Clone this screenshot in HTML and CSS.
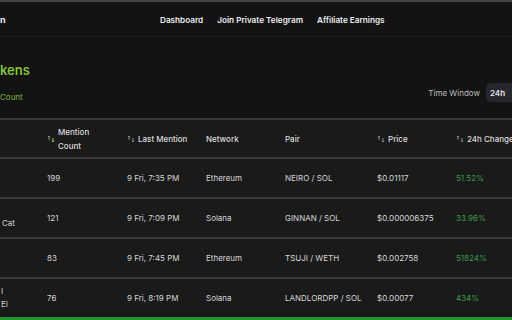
FILE: index.html
```html
<!DOCTYPE html>
<html lang="en">

<head>
    <meta charset="UTF-8">
    <meta name="viewport" content="width=device-width, initial-scale=1.0">
    <title>Trending Tokens</title>
    <link rel="stylesheet" href="styles.css">
</head>

<body>
    <div class="top-line"></div>
    <header class="nav">
        <div class="logo">n</div>
        <nav class="nav-links">
            <a href="#">Dashboard</a>
            <a href="#">Join Private Telegram</a>
            <a href="#">Affiliate Earnings</a>
        </nav>
    </header>

    <section class="hero">
        <div class="hero-text">
            <h1 class="title">kens</h1>
            <div class="subtitle">Count</div>
        </div>
        <div class="controls">
            <span class="control-label">Time Window</span>
            <button class="window-button">24h</button>
        </div>
    </section>

    <div class="token-table">
        <div class="row head">
            <div class="cell name"></div>
            <div class="cell sortable">
                <svg class="sort-icon" viewBox="0 0 8 8"><path d="M2 5V1M0.8 2.2L2 1l1.2 1.2" stroke="#8a8a8a" /><path d="M6 3v4M4.8 5.8L6 7l1.2-1.2" stroke="#8bc34a" /></svg>
                <span>Mention<br>Count</span>
            </div>
            <div class="cell sortable">
                <svg class="sort-icon" viewBox="0 0 8 8"><path d="M2 5V1M0.8 2.2L2 1l1.2 1.2" stroke="#8a8a8a" /><path d="M6 3v4M4.8 5.8L6 7l1.2-1.2" stroke="#8a8a8a" /></svg>
                <span>Last Mention</span>
            </div>
            <div class="cell">Network</div>
            <div class="cell">Pair</div>
            <div class="cell sortable">
                <svg class="sort-icon" viewBox="0 0 8 8"><path d="M2 5V1M0.8 2.2L2 1l1.2 1.2" stroke="#8a8a8a" /><path d="M6 3v4M4.8 5.8L6 7l1.2-1.2" stroke="#8a8a8a" /></svg>
                <span>Price</span>
            </div>
            <div class="cell sortable">
                <svg class="sort-icon" viewBox="0 0 8 8"><path d="M2 5V1M0.8 2.2L2 1l1.2 1.2" stroke="#8a8a8a" /><path d="M6 3v4M4.8 5.8L6 7l1.2-1.2" stroke="#8a8a8a" /></svg>
                <span>24h Change</span>
            </div>
        </div>

        <div class="row">
            <div class="cell name"></div>
            <div class="cell">199</div>
            <div class="cell">9 Fri, 7:35 PM</div>
            <div class="cell">Ethereum</div>
            <div class="cell">NEIRO / SOL</div>
            <div class="cell">$0.01117</div>
            <div class="cell change">51.52%</div>
        </div>
        <div class="row">
            <div class="cell name"><span class="low">Cat</span></div>
            <div class="cell">121</div>
            <div class="cell">9 Fri, 7:09 PM</div>
            <div class="cell">Solana</div>
            <div class="cell">GINNAN / SOL</div>
            <div class="cell">$0.000006375</div>
            <div class="cell change">33.96%</div>
        </div>
        <div class="row">
            <div class="cell name"></div>
            <div class="cell">83</div>
            <div class="cell">9 Fri, 7:45 PM</div>
            <div class="cell">Ethereum</div>
            <div class="cell">TSUJI / WETH</div>
            <div class="cell">$0.002758</div>
            <div class="cell change">51824%</div>
        </div>
        <div class="row last">
            <div class="cell name"><span class="two-line">I<br>EI</span></div>
            <div class="cell">76</div>
            <div class="cell">9 Fri, 8:19 PM</div>
            <div class="cell">Solana</div>
            <div class="cell">LANDLORDPP / SOL</div>
            <div class="cell">$0.00077</div>
            <div class="cell change">434%</div>
        </div>
    </div>
</body>

</html>
```

FILE: styles.css
```css
body {
    margin: 0;
    padding: 0;
    width: 512px;
    height: 320px;
    overflow: hidden;
    background-color: #131313;
    color: #d6d6d6;
    font-family: Inter, "Noto Sans", sans-serif;
}

.top-line {
    height: 2px;
    background-color: #454545;
}

.nav {
    display: flex;
    align-items: center;
    height: 35px;
    padding-top: 1px;
    box-sizing: border-box;
    border-bottom: 1px solid #1e1e1e;
}

.logo {
    font-size: 9px;
    font-weight: 700;
    color: #eeeeee;
    width: 6px;
}

.nav-links {
    display: flex;
    gap: 14px;
    margin-left: 154px;
}

.nav-links a {
    color: #ececec;
    text-decoration: none;
    font-size: 8.2px;
    font-weight: 600;
}

.hero {
    display: flex;
    justify-content: space-between;
    align-items: flex-end;
    width: 560px;
    margin-top: 23px;
}

.title {
    margin: 0;
    font-size: 13px;
    line-height: 20px;
    font-weight: 600;
    color: #86c23a;
}

.subtitle {
    margin-top: 12px;
    font-size: 8px;
    line-height: 10px;
    color: #7fb83c;
}

.controls {
    display: flex;
    align-items: center;
    gap: 6px;
}

.control-label {
    font-size: 8px;
    color: #bdbdbd;
}

.window-button {
    width: 74px;
    height: 19px;
    padding: 0 0 0 4px;
    text-align: left;
    border: none;
    border-radius: 5px;
    background-color: #26262e;
    color: #e6e6e6;
    font-family: Inter, "Noto Sans", sans-serif;
    font-size: 8px;
    font-weight: 600;
}

.token-table {
    margin-top: 16px;
    border-top: 2px solid #3a3a3a;
    background-color: #1a1a1a;
}

.row {
    display: grid;
    grid-template-columns: 47px 80px 79px 79px 92px 79px 1fr;
    align-items: center;
    height: 38px;
    border-bottom: 2px solid #3a3a3a;
    font-size: 8px;
}

.row.head {
    height: 37px;
    font-weight: 500;
    color: #dcdcdc;
}

.row.last {
    border-bottom: 3px solid #22962a;
}

.cell {
    white-space: nowrap;
}

.cell.name {
    padding-left: 1px;
    font-size: 8px;
}

.low {
    display: inline-block;
    padding-left: 1px;
    margin-top: 10px;
}

.two-line {
    display: inline-block;
    line-height: 13px;
}

.sortable {
    display: flex;
    align-items: center;
    gap: 3px;
    line-height: 14px;
}

.sort-icon {
    width: 8px;
    height: 8px;
    fill: none;
    stroke-width: 1;
}

.change {
    color: #3f9a47;
}
```
